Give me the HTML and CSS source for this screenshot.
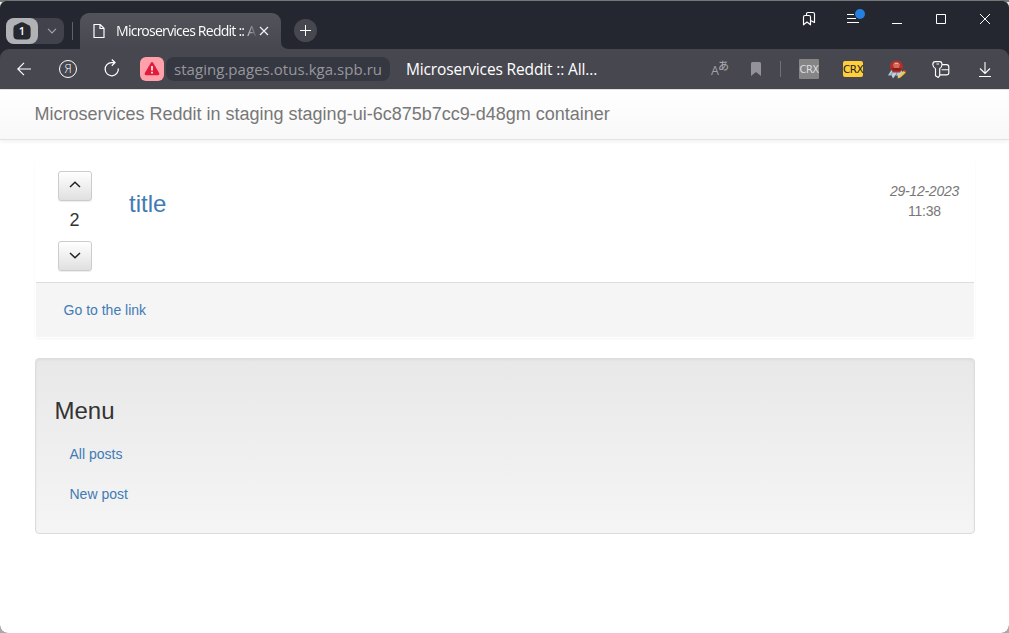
FILE: index.html
```html
<!DOCTYPE html>
<html lang="en">
<head>
<meta charset="utf-8">
<title>Microservices Reddit :: All posts</title>
<link rel="stylesheet" href="styles.css">
</head>
<body>
<div class="window">
  <header class="tabstrip">
    <div class="tab-group">
      <div class="tab-count"><svg width="20" height="20" viewBox="0 0 20 20"><path d="M8.5 1.6 3.2 4.3Q1.4 5.3 1.4 7.5v6.7Q1.4 18.5 5.7 18.5h8.6q4.3 0 4.3-4.3V7.5q0-2.2-1.8-3.2L11.5 1.6Q10 .9 8.5 1.6z" fill="#262830"/></svg><b>1</b></div>
      <svg class="group-arrow" width="10" height="6" viewBox="0 0 10 6"><path d="M1 .8l4 4 4-4" fill="none" stroke="#a3a4aa" stroke-width="1.2"/></svg>
    </div>
    <i class="strip-divider"></i>
    <div class="tab">
      <svg width="12" height="16" viewBox="0 0 12 16"><path d="M1 1.5h6.2L11 5.3v9.2H1zM7 1.5v4h4" fill="none" stroke="#fff" stroke-width="1.2"/></svg>
      <span class="tab-title">Microservices Reddit :: A</span>
      <svg width="10" height="10" viewBox="0 0 10 10"><path d="M1 1l8 8M9 1l-8 8" stroke="#f2f2f4" stroke-width="1.15"/></svg>
    </div>
    <svg class="tab-flare" width="8" height="8" viewBox="0 0 8 8"><path d="M0 0q0 8 8 8H0z" fill="#474750"/></svg>
    <div class="new-tab"><svg width="11" height="11" viewBox="0 0 11 11"><path d="M5.5 0v11M0 5.5h11" stroke="#fff"/></svg></div>
    <div class="window-controls">
      <svg class="w-saved" width="14" height="16" viewBox="0 0 14 16"><path d="M1.500 6q0-1.500 1.500-1.500h4Q8.500 4.500 8.500 6v7.800L5 11l-3.500 2.800zM4.500 4.500V3Q4.500 1.500 6 1.500h5Q12.500 1.500 12.500 3v8.500l-4-2" fill="none" stroke="#fff" stroke-width="1.15" stroke-linejoin="round"/></svg>
      <div class="w-menu"><svg width="19" height="16" viewBox="0 0 19 16"><path d="M0 5.5h7M0 9.500h9M0 13.500h12" stroke="#fff"/><circle cx="13" cy="5" r="5" fill="#2580df"/></svg></div>
      <svg class="w-min" width="10" height="12" viewBox="0 0 10 12"><path d="M0 10.5h10" stroke="#fff"/></svg>
      <svg class="w-max" width="10" height="10" viewBox="0 0 10 10"><path d="M.5.5h9v9h-9z" fill="none" stroke="#fff"/></svg>
      <svg class="w-close" width="10" height="10" viewBox="0 0 10 10"><path d="M0 0l10 10M10 0L0 10" stroke="#fff"/></svg>
    </div>
  </header>

  <div class="toolbar">
    <svg class="t-back" width="14" height="14" viewBox="0 0 14 14"><path d="M14 7H.8M7 .8L.8 7 7 13.2" fill="none" stroke="#fff" stroke-width="1.15"/></svg>
    <div class="t-yandex">Я</div>
    <svg class="t-reload" width="16" height="18" viewBox="0 0 16 18"><path d="M14.300 9.500A6.600 6.600 0 1 1 7.600 3.600h3.400M7.800.5l3.200 3.100-3.200 3.200" fill="none" stroke="#fff" stroke-width="1.25"/></svg>
    <div class="t-warning"><svg width="16" height="14" viewBox="0 0 16 14"><path d="M6.700 1Q8-.8 9.300 1l5.800 10q.8 2.200-1.400 2.200H2.300Q.1 13.200.9 11z" fill="#e21b3c"/><path d="M8 4v4.600M8 9.700v1.800" stroke="#fff" stroke-width="1.6"/></svg></div>
    <div class="address">staging.pages.otus.kga.spb.ru</div>
    <div class="page-title">Microservices Reddit :: All...</div>
    <div class="extensions">
      <div class="translate"><span>A</span><span class="kana">あ</span></div>
      <svg class="t-mark" width="10" height="14" viewBox="0 0 10 14"><path d="M1.500 0h7Q10 0 10 1.500V14l-5-4-5 4V1.500Q0 0 1.500 0z" fill="#929298"/></svg>
      <i class="tool-divider"></i>
      <div class="crx crx-gray"><span>CRX</span></div>
      <div class="crx crx-yellow"><span>CRX</span></div>
      <svg class="t-agent" width="19" height="19" viewBox="0 0 19 19"><path d="M4 9L0 15.500l3.500-.3L5 18.500l3.500-4.500 2 4 3-3 2-2L12 9z" fill="#b9cde0"/><path d="M5 11l-2 4M9 11l-.5 5" stroke="#7d92ab" fill="none"/><path d="M2 8Q1.500 .6 8.500.4q6.500.2 6.500 7.600l-3 4.500H5z" fill="#b3302a"/><path d="M5 4.500q3-4 7 0l-1 3.500H6z" fill="#d8685c"/><path d="M6.500 3.300h4" stroke="#f4c0b8"/><path d="M3 8.500q5-1 11 0L12 10.500H5.500z" fill="#7c211d"/><path d="M10 16.500l6-6 2 2-5.500 5-3 1z" fill="#edcb48"/><path d="M15.500 11l1.200-1 1.800 1.800-1 1z" fill="#d93b3b"/></svg>
      <svg class="t-key" width="18" height="19" viewBox="0 0 18 19"><path d="M3.500 8.500Q1 7.500.8 4.500.8 1.600 3.500 1.600h4.200q2.300 0 2.300 2.900 0 2.900-2.300 4v7.200L6.300 17.500l-2.800-1.800V8.500M4.500 4h2.500M10 4.600h4.500q2.300 0 2.300 2.300v5.800q0 2.200-2.300 2.200H7.700M9.500 9.700h7.300" fill="none" stroke="#fff" stroke-width="1.15" stroke-linejoin="round"/></svg>
      <svg class="t-down" width="12" height="15" viewBox="0 0 12 15"><path d="M6 0v11M1 6.500L6 11.500l5-5M0 14.500h12" fill="none" stroke="#fff" stroke-width="1.1"/></svg>
    </div>
  </div>

  <main class="page">
    <nav class="navbar"><a>Microservices Reddit in staging staging-ui-6c875b7cc9-d48gm container</a></nav>
    <div class="container">
      <article class="panel">
        <div class="panel-body">
          <div class="votes">
            <button><svg width="12" height="7" viewBox="0 0 12 7"><path d="M1 6l5-4.700L11 6" fill="none" stroke="#222" stroke-width="1.500"/></svg></button>
            <span>2</span>
            <button><svg width="12" height="7" viewBox="0 0 12 7"><path d="M1 1l5 4.700L11 1" fill="none" stroke="#222" stroke-width="1.500"/></svg></button>
          </div>
          <h3 class="post-title">title</h3>
          <div class="date"><em>29-12-2023</em><span>11:38</span></div>
        </div>
        <footer class="panel-footer"><a>Go to the link</a></footer>
      </article>
      <aside class="well">
        <h3>Menu</h3>
        <a>All posts</a>
        <a>New post</a>
      </aside>
    </div>
  </main>
</div>
</body>
</html>
```
FILE: styles.css
```css
* { box-sizing: border-box; }
body { margin: 0; background: linear-gradient(#777 0 2px, #eee 2px 50%, #aaa 50%); font-family: "Liberation Sans", Arial, sans-serif; font-size: 14px; line-height: 20px; color: #333; }
svg { display: block; flex: none; }
.window { height: 633px; display: flex; flex-direction: column; border-radius: 8px; overflow: hidden; border-top: 1px solid #737777; background: #24272f; }

.tabstrip { height: 48px; flex: none; display: flex; align-items: flex-start; background: #24272f; }
.tab-group { display: flex; align-items: center; width: 58px; height: 26px; margin: 17px 0 0 6px; border-radius: 8px; background: #41424b; }
.tab-count { display: grid; place-items: center; width: 32px; height: 26px; border-radius: 8px; background: #b1b2b6; }
.tab-count > * { grid-area: 1 / 1; }
.tab-count b { font: 600 11px/20px "Open Sans", sans-serif; color: #fff; }
.group-arrow { margin-left: 9px; }
.strip-divider { width: 1px; height: 18px; margin: 21px 7px 0 8px; background: #60626a; }
.tab { display: flex; align-items: center; width: 201px; height: 36px; margin-top: 12px; padding-left: 13px; border-radius: 9px 9px 0 0; background: linear-gradient(#53535c, #474750); }
.tab-title { width: 140px; margin: 0 3px 0 11px; white-space: nowrap; font: 14px/20px "Noto Sans", "Open Sans", sans-serif; letter-spacing: -0.8px; color: transparent; background: linear-gradient(90deg, #fff 127px, #66666e 139px); background-clip: text; -webkit-background-clip: text; }
.tab-flare { margin-top: 40px; }
.new-tab { display: grid; place-items: center; width: 23px; height: 23px; margin: 18px 0 0 5px; border-radius: 50%; background: #474750; }
.window-controls { margin: 9px 19px 0 auto; height: 18px; display: flex; align-items: center; }
.w-menu { margin: -4px 26px 0 31px; }
.w-min { margin-top: -1px; }
.w-max { margin: 0 34px; }

.toolbar { height: 40px; flex: none; display: flex; align-items: center; background: #474750; border-radius: 9px 9px 0 0; }
.t-back { margin-left: 17px; }
.t-yandex { width: 18px; height: 18px; margin: 0 28px 0 28px; border: 1px solid #fff; border-radius: 50%; text-align: center; font: 300 12px/15px "Open Sans", sans-serif; color: #fff; }
.t-reload { margin: 0 20px 2px -1px; }
.t-warning { display: grid; place-items: center; width: 24px; height: 24px; border-radius: 6px; background: #ffa0aa; }
.address { width: 224px; height: 24px; margin-left: 2px; padding-left: 8px; border-radius: 8px; background: #363841; color: #96979d; white-space: nowrap; font: 15px/24px "Open Sans", sans-serif; letter-spacing: 0.04px; }
.page-title { margin-left: 16px; color: #fff; white-space: nowrap; font: 15.5px/24px "Open Sans", sans-serif; letter-spacing: -0.14px; }
.extensions { margin: 0 18px 0 auto; display: flex; align-items: center; }
.translate { display: flex; color: #a2a2a8; font: 12.5px/12px "Open Sans", sans-serif; margin-right: 22px; }
.translate span { padding-top: 4px; }
.translate .kana { padding: 0; margin: -2px 0 0 -1px; font: 500 11px/12px "Noto Sans CJK JP", sans-serif; }
.tool-divider { width: 1px; height: 16px; margin: 0 18px 0 19px; background: #707078; }
.crx { display: flex; justify-content: center; width: 20px; height: 20px; border-radius: 1px; white-space: nowrap; letter-spacing: -0.6px; }
.crx-gray { background: #858585; color: #ddd; font: 10px/21px "DejaVu Sans", sans-serif; }
.crx-yellow { height: 16px; margin: 0 25px 0 24px; background: #ffce3b; color: #222; font: 10.5px/17px "DejaVu Sans", sans-serif; border-radius: 2px; }
.t-key { margin: 0 29px 0 25px; }

.page { flex: 1; background: #fff; border-top: 1px solid #e7e7e7; }
.navbar { height: 50px; padding: 14px 34.5px; color: #777; font-size: 18px; background: linear-gradient(#fff, #f8f8f8); border-bottom: 1px solid #e2e2e2; box-shadow: 0 1px 5px rgba(0, 0, 0, .075); }
.container { padding: 20px 34px 0 35px; }
.panel { height: 178px; border: 1px solid transparent; border-radius: 4px; box-shadow: 0 1px 2px rgba(0, 0, 0, .05); }
.panel-body { height: 121px; padding: 10px 15px 0 22px; display: flex; align-items: flex-start; }
.votes { width: 34px; display: flex; flex-direction: column; align-items: center; font-size: 18px; }
.votes span { margin: 9px 1px 11px 0; }
.votes button { display: grid; place-items: start center; width: 34px; height: 30px; padding: 9px 1px 0 0; border: 1px solid #ccc; border-radius: 3px; background: linear-gradient(#fff, #e0e0e0); box-shadow: inset 0 1px 0 rgba(255, 255, 255, .15), 0 1px 1px rgba(0, 0, 0, .075); }
.votes button:last-child { padding-top: 10px; }
.post-title { margin: 19px 0 0 37px; font-size: 24px; font-weight: 400; line-height: 27px; color: #417bb5; }
.date { margin: 10px 0 0 auto; display: flex; flex-direction: column; align-items: center; color: #777; letter-spacing: -0.25px; }
.panel-footer { height: 55px; padding: 17px 27.6px; background: #f5f5f5; border-top: 1px solid #ddd; border-radius: 0 0 3px 3px; }
a { color: #417bb5; }
.navbar a { color: inherit; }
.well { height: 176px; margin-top: 20px; padding: 39px 18.5px 0; display: flex; flex-direction: column; border: 1px solid #dcdcdc; border-radius: 4px; background: linear-gradient(#e8e8e8, #f5f5f5); box-shadow: inset 0 1px 3px rgba(0, 0, 0, .05), 0 1px 0 rgba(255, 255, 255, .1); }
.well h3 { margin: 0 0 10px; font-size: 24px; font-weight: 400; line-height: 26px; }
.well a { padding: 10px 15px; }
```
